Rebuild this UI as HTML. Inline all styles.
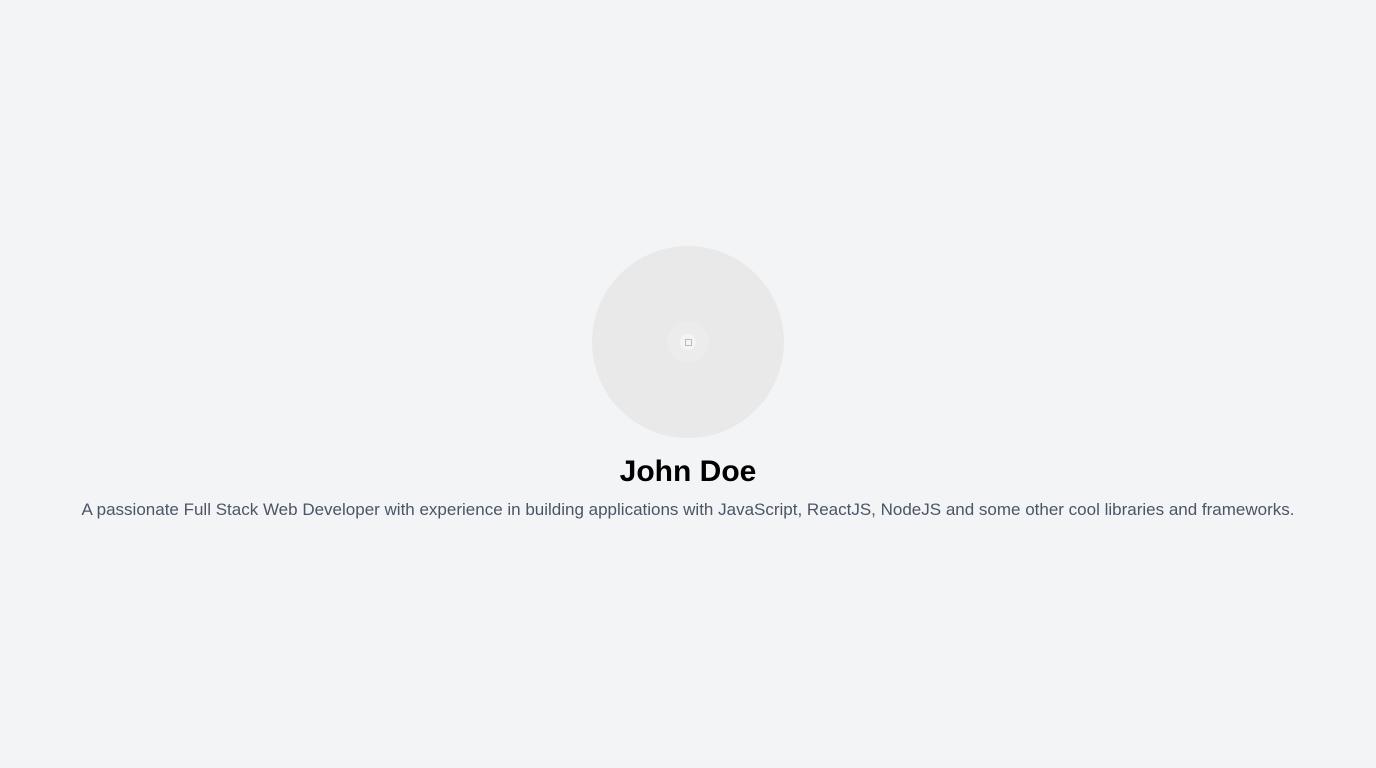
<!DOCTYPE html>
<html><head><style>
html,body{margin:0;padding:0;background:#f3f4f6;width:1376px;height:768px;overflow:hidden;font-family:"Liberation Sans",sans-serif;}
.c{position:absolute;left:592px;top:246px;width:192px;height:192px;border-radius:50%;background:#e9e9e9;}
.i{position:absolute;left:667px;top:321px;width:42px;height:42px;border-radius:50%;background:#ececec;}
.j{position:absolute;left:680px;top:334px;width:16px;height:16px;border-radius:50%;background:#f4f4f4;}
.k{position:absolute;left:685px;top:339px;width:5px;height:5px;border:1px solid #bbb;}
h1{position:absolute;top:452px;left:0;width:1376px;margin:0;text-align:center;font-size:30px;font-weight:bold;color:#000;line-height:40px;}
p{position:absolute;top:499px;left:0;width:1376px;margin:0;text-align:center;font-size:17px;color:#4b5563;line-height:22px;}
</style></head><body>
<div class="c"></div><div class="i"></div><div class="j"></div><div class="k"></div>
<h1>John Doe</h1>
<p>A passionate Full Stack Web Developer with experience in building applications with JavaScript, ReactJS, NodeJS and some other cool libraries and frameworks.</p>
</body></html>
